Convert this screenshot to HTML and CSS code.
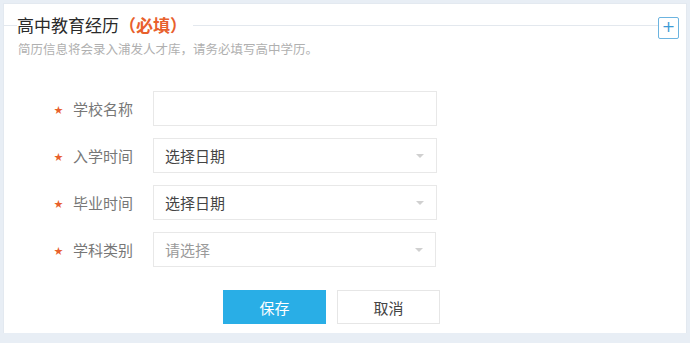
FILE: index.html
```html
<!DOCTYPE html>
<html lang="zh-CN">
<head>
    <meta charset="UTF-8">
    <title>高中教育经历</title>
    <link rel="stylesheet" href="styles.css">
</head>
<body>
    <div class="edu-card">
        <div class="edu-head">
            <span class="head-line short"></span>
            <h2 class="edu-title">高中教育经历<em>（必填）</em></h2>
            <span class="head-line"></span>
            <span class="add-btn">+</span>
        </div>
        <p class="edu-tip">简历信息将会录入浦发人才库，请务必填写高中学历。</p>

        <form class="edu-form">
            <div class="field">
                <label class="field-label"><i class="star">★</i>学校名称</label>
                <div class="field-box"></div>
            </div>
            <div class="field">
                <label class="field-label"><i class="star">★</i>入学时间</label>
                <div class="field-box select">选择日期<span class="caret"></span></div>
            </div>
            <div class="field">
                <label class="field-label"><i class="star">★</i>毕业时间</label>
                <div class="field-box select">选择日期<span class="caret"></span></div>
            </div>
            <div class="field">
                <label class="field-label"><i class="star">★</i>学科类别</label>
                <div class="field-box select placeholder narrow">请选择<span class="caret"></span></div>
            </div>
            <div class="actions">
                <button type="button" class="btn btn-save">保存</button>
                <button type="button" class="btn btn-cancel">取消</button>
            </div>
        </form>
    </div>
</body>
</html>
```

FILE: styles.css
```css
:root {
    --page-bg: #e8eef5;
    --line: #e3e8ee;
    --orange: #e8602c;
    --blue: #29aee6;
    --text: #444;
    --label: #777;
    --muted: #b0b0b0;
}

* {
    box-sizing: border-box;
}

body {
    margin: 0;
    background: var(--page-bg);
    font-family: "Noto Sans CJK SC", "Liberation Sans", sans-serif;
    color: var(--text);
}

.edu-card {
    margin: 3px 3px 0 3px;
    width: 684px;
    height: 330px;
    background: #fff;
    border: 1px solid #e3e9f0;
    border-bottom: none;
    padding-top: 10px;
}

.edu-head {
    display: flex;
    align-items: center;
    height: 22px;
    padding-right: 7px;
}

.head-line {
    flex: 1;
    height: 1px;
    background: var(--line);
}

.head-line.short {
    flex: 0 0 13px;
}

.edu-title {
    margin: 0;
    padding: 0 6px 0 0;
    font-size: 17px;
    font-weight: normal;
    line-height: 22px;
    color: #2a2a2a;
}

.edu-title em {
    font-style: normal;
    font-weight: bold;
    color: var(--orange);
}

.add-btn {
    width: 21px;
    height: 22px;
    margin-top: 5px;
    border: 1px solid #6cb4e0;
    border-radius: 2px;
    color: #3c9ad6;
    font-size: 16px;
    line-height: 18px;
    text-align: center;
    font-family: "DejaVu Sans", sans-serif;
}

.edu-tip {
    margin: 4px 0 0 14px;
    font-size: 12.5px;
    line-height: 18px;
    color: var(--muted);
}

.edu-form {
    margin-top: 33px;
    padding-left: 50px;
}

.field {
    display: flex;
    align-items: center;
    height: 35px;
    margin-bottom: 12px;
}

.field-label {
    width: 99px;
    font-size: 15px;
    color: var(--label);
    white-space: nowrap;
}

.star {
    display: inline-block;
    width: 19px;
    font-style: normal;
    font-size: 9px;
    color: var(--orange);
    vertical-align: 2px;
}

.field-box {
    position: relative;
    width: 284px;
    height: 35px;
    border: 1px solid #e8e8e8;
    padding-left: 11px;
    font-size: 15px;
    line-height: 33px;
    color: var(--text);
}

.field-box.narrow {
    width: 283px;
}

.field-box.placeholder {
    color: #9a9a9a;
}

.caret {
    position: absolute;
    right: 12px;
    top: 15px;
    border-left: 4px solid transparent;
    border-right: 4px solid transparent;
    border-top: 4px solid #d0d0d0;
}

.actions {
    display: flex;
    gap: 11px;
    padding-left: 169px;
    margin-top: 23px;
}

.btn {
    width: 103px;
    height: 34px;
    font-family: inherit;
    font-size: 15px;
    cursor: pointer;
}

.btn-save {
    background: var(--blue);
    border: none;
    color: #fff;
}

.btn-cancel {
    background: #fff;
    border: 1px solid #e6e6e6;
    color: var(--text);
}
```
